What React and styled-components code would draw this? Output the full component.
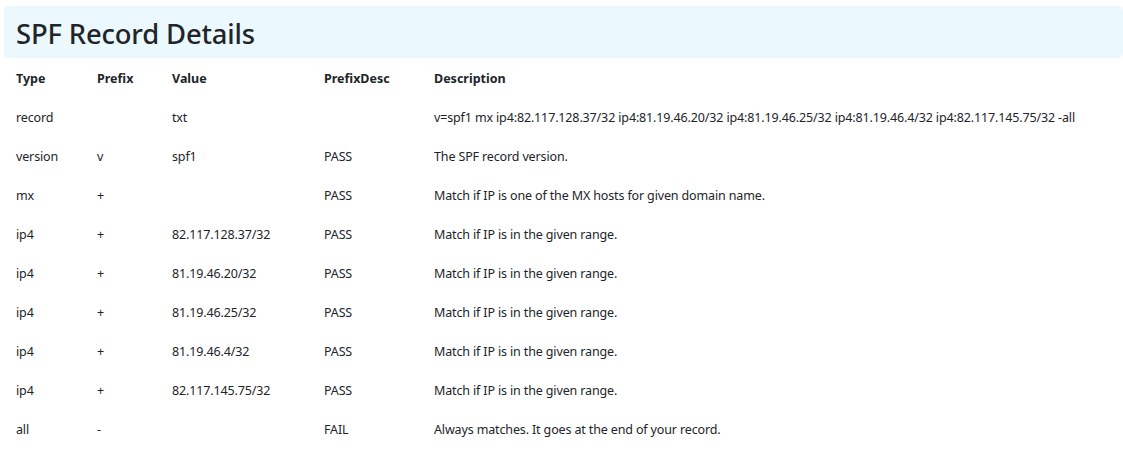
import React from "react";
import styled, { createGlobalStyle } from "styled-components";

const Global = createGlobalStyle`
  html, body { margin: 0; padding: 0; background: #ffffff; }
  body { font-family: "Noto Sans", "Open Sans", sans-serif; color: #212529; }
`;

const Page = styled.div`
  padding: 6px 0 0 4px;
`;

const Banner = styled.div`
  background: #ebf8fe;
  border-radius: 5px;
  height: 52px;
  display: flex;
  align-items: center;
  padding: 2px 0 0 12px;
  box-sizing: border-box;
`;

const Title = styled.h1`
  margin: 0;
  font-size: 27.4px;
  font-weight: 500;
  letter-spacing: -0.15px;
  color: #212529;
`;

const Table = styled.table`
  border-collapse: collapse;
  table-layout: fixed;
  width: 100%;
  margin-top: 1px;
  font-size: 12.5px;
`;

const Cell = styled.td`
  height: 39px;
  padding: 0 12px;
  vertical-align: middle;
  white-space: nowrap;
  text-align: left;
  font-weight: ${(p) => (p.$head ? 700 : 400)};
  letter-spacing: ${(p) => (p.$head ? "0" : "-0.14px")};
`;

const cols = [81, 75, 152, 110];

const rows = [
  ["record", "", "txt", "", "v=spf1 mx ip4:82.117.128.37/32 ip4:81.19.46.20/32 ip4:81.19.46.25/32 ip4:81.19.46.4/32 ip4:82.117.145.75/32 -all"],
  ["version", "v", "spf1", "PASS", "The SPF record version."],
  ["mx", "+", "", "PASS", "Match if IP is one of the MX hosts for given domain name."],
  ["ip4", "+", "82.117.128.37/32", "PASS", "Match if IP is in the given range."],
  ["ip4", "+", "81.19.46.20/32", "PASS", "Match if IP is in the given range."],
  ["ip4", "+", "81.19.46.25/32", "PASS", "Match if IP is in the given range."],
  ["ip4", "+", "81.19.46.4/32", "PASS", "Match if IP is in the given range."],
  ["ip4", "+", "82.117.145.75/32", "PASS", "Match if IP is in the given range."],
  ["all", "-", "", "FAIL", "Always matches. It goes at the end of your record."],
];

export default function App() {
  return (
    <Page>
      <Global />
      <Banner>
        <Title>SPF Record Details</Title>
      </Banner>
      <Table>
        <colgroup>
          {cols.map((w, i) => (
            <col key={i} style={{ width: w }} />
          ))}
          <col />
        </colgroup>
        <thead>
          <tr>
            {["Type", "Prefix", "Value", "PrefixDesc", "Description"].map((h) => (
              <Cell as="th" $head key={h}>
                {h}
              </Cell>
            ))}
          </tr>
        </thead>
        <tbody>
          {rows.map((r, i) => (
            <tr key={i}>
              {r.map((c, j) => (
                <Cell key={j}>{c}</Cell>
              ))}
            </tr>
          ))}
        </tbody>
      </Table>
    </Page>
  );
}
